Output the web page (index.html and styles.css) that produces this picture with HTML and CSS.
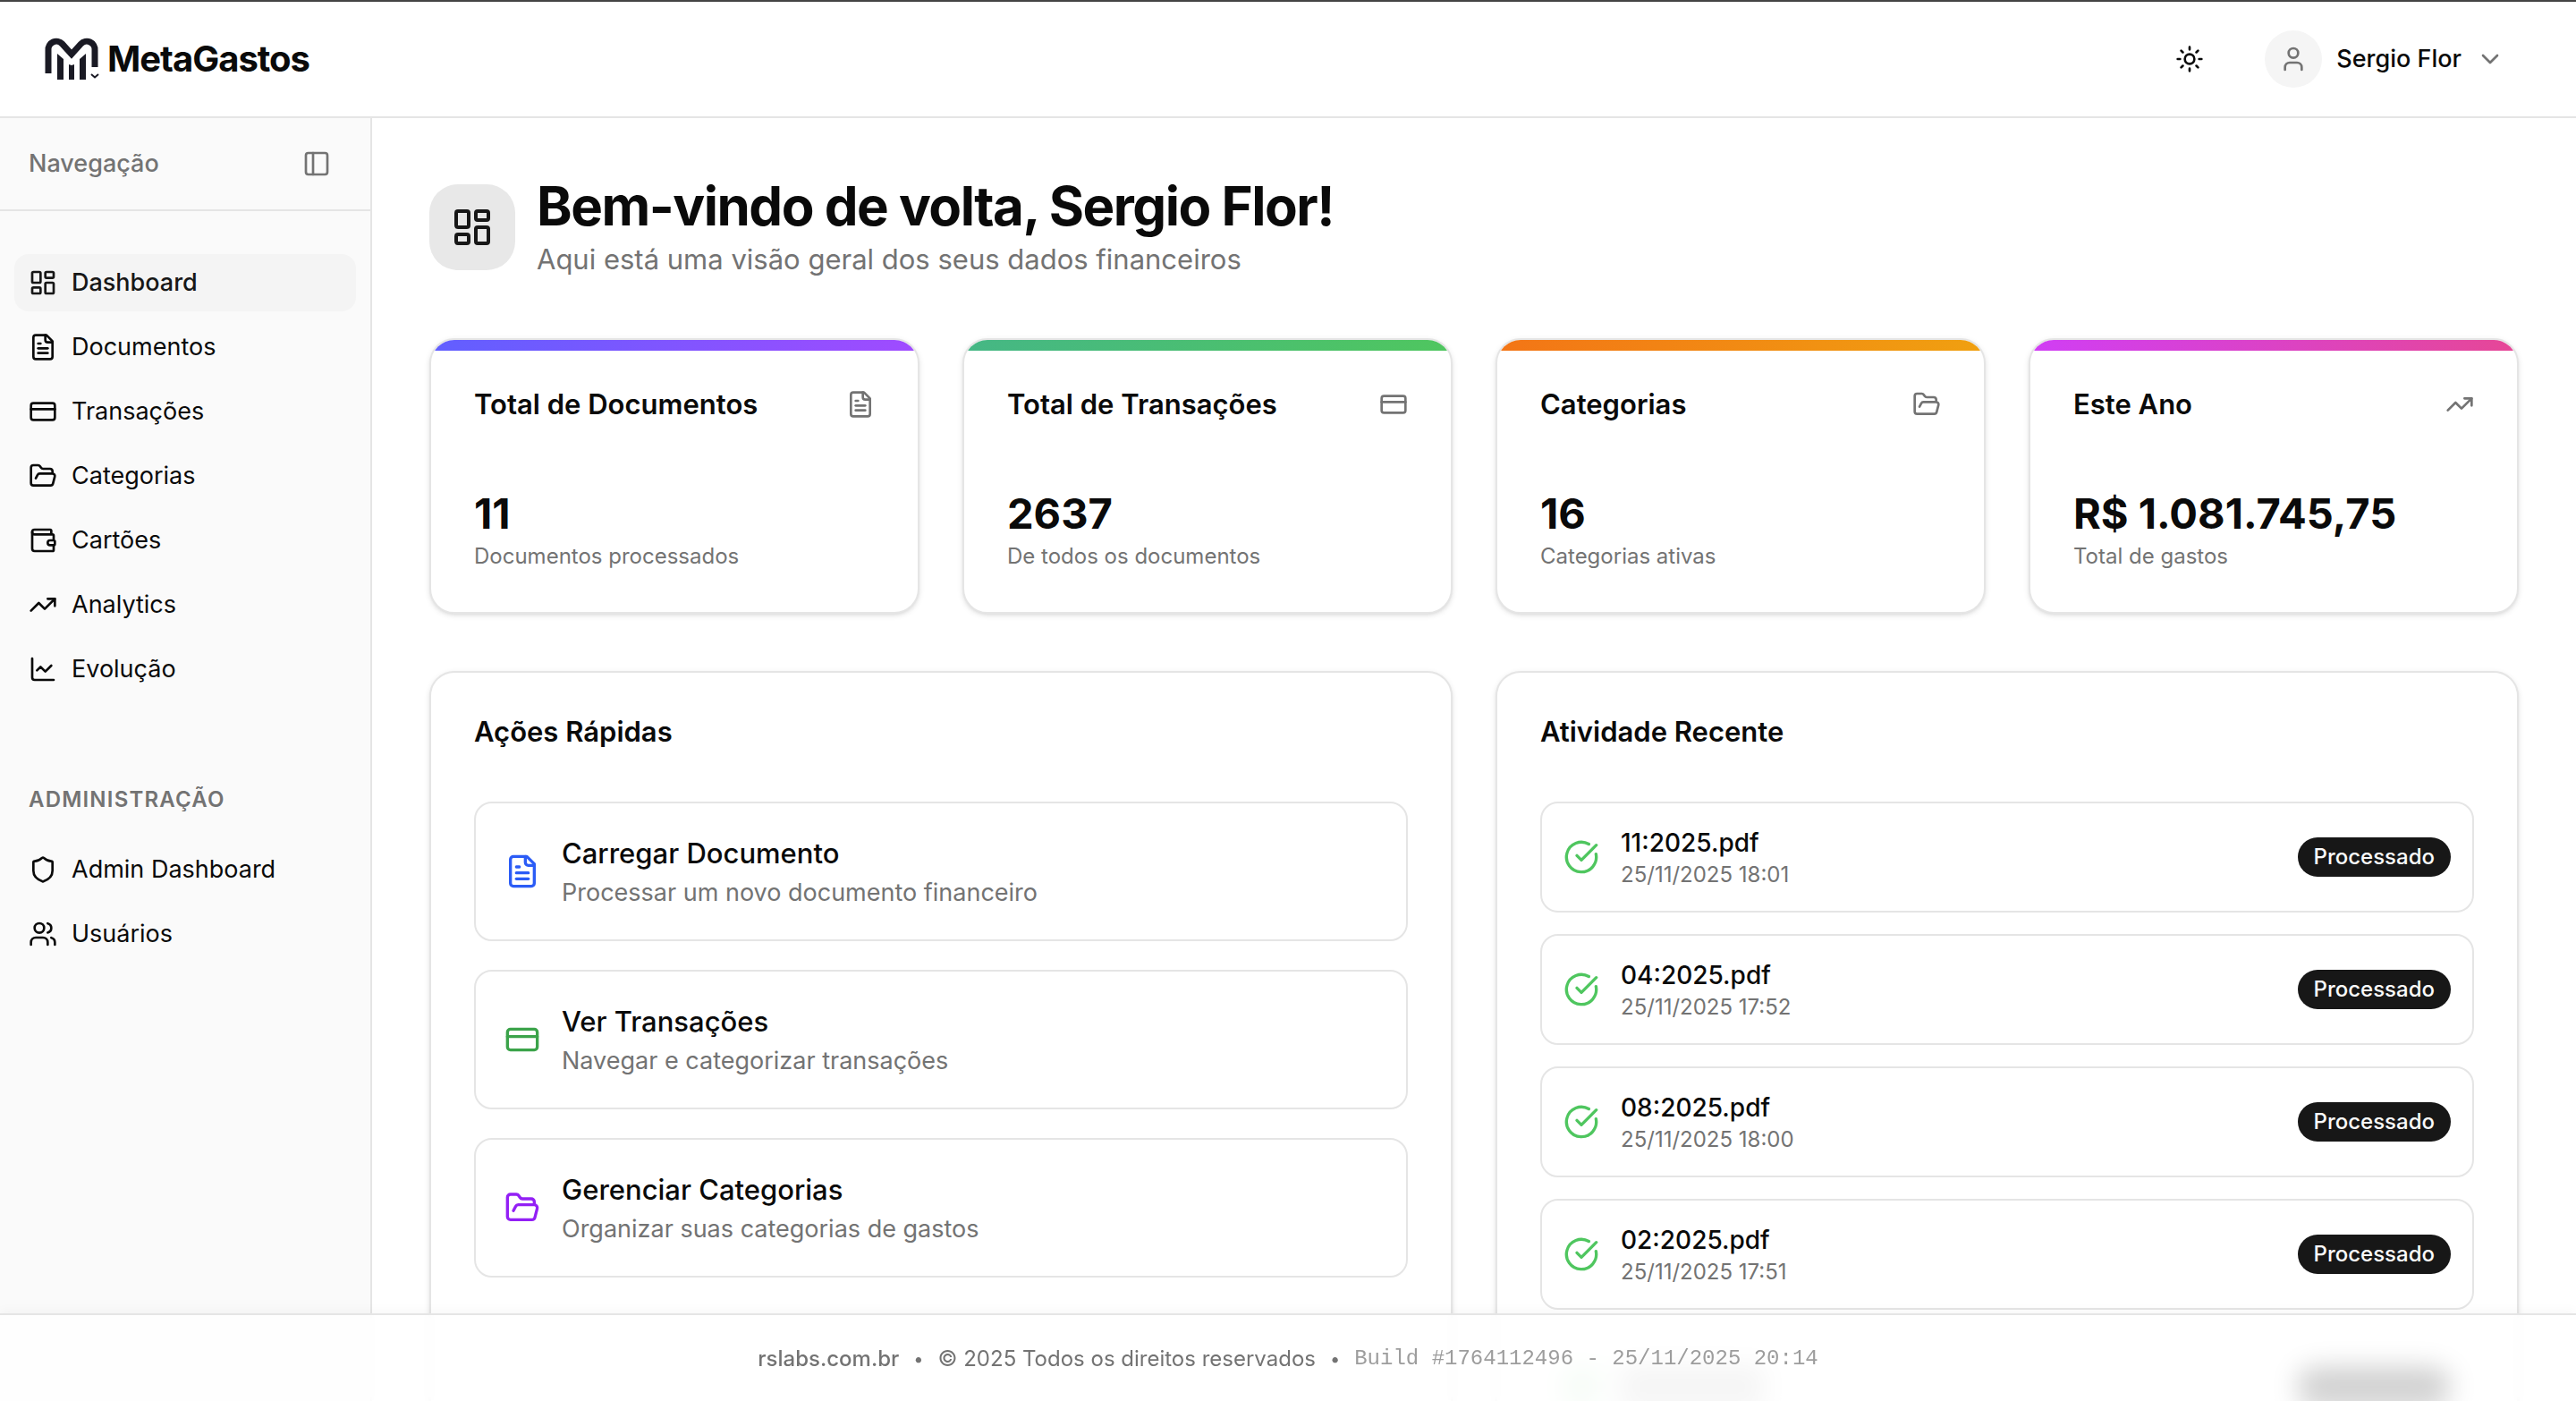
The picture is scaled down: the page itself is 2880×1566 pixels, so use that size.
FILE: index.html
```html
<!DOCTYPE html>
<html lang="pt-BR">
<head>
    <meta charset="UTF-8">
    <meta name="viewport" content="width=device-width, initial-scale=1.0">
    <title>MetaGastos</title>
    <link rel="stylesheet" href="styles.css">
</head>
<body>
    <!-- Icon set -->
    <svg class="sprite" xmlns="http://www.w3.org/2000/svg">
        <symbol id="dashboard" viewBox="0 0 24 24">
            <rect width="7" height="9" x="3" y="3" rx="1"/>
            <rect width="7" height="5" x="14" y="3" rx="1"/>
            <rect width="7" height="9" x="14" y="12" rx="1"/>
            <rect width="7" height="5" x="3" y="16" rx="1"/>
        </symbol>
        <symbol id="file" viewBox="0 0 24 24">
            <path d="M15 2H6a2 2 0 0 0-2 2v16a2 2 0 0 0 2 2h12a2 2 0 0 0 2-2V7Z"/>
            <path d="M14 2v4a2 2 0 0 0 2 2h4"/>
            <path d="M10 9H8"/>
            <path d="M16 13H8"/>
            <path d="M16 17H8"/>
        </symbol>
        <symbol id="card" viewBox="0 0 24 24">
            <rect width="20" height="14" x="2" y="5" rx="2"/>
            <path d="M2 10h20"/>
        </symbol>
        <symbol id="folder" viewBox="0 0 24 24">
            <path d="m6 14 1.5-2.9A2 2 0 0 1 9.24 10H20a2 2 0 0 1 1.94 2.5l-1.54 6a2 2 0 0 1-1.95 1.5H4a2 2 0 0 1-2-2V5a2 2 0 0 1 2-2h3.9a2 2 0 0 1 1.69.9l.81 1.2a2 2 0 0 0 1.67.9H18a2 2 0 0 1 2 2v2"/>
        </symbol>
        <symbol id="wallet" viewBox="0 0 24 24">
            <path d="M19 7V4a1 1 0 0 0-1-1H5a2 2 0 0 0 0 4h15a1 1 0 0 1 1 1v4h-3a2 2 0 0 0 0 4h3a1 1 0 0 0 1-1v-2a1 1 0 0 0-1-1"/>
            <path d="M3 5v14a2 2 0 0 0 2 2h15a1 1 0 0 0 1-1v-4"/>
        </symbol>
        <symbol id="trending" viewBox="0 0 24 24">
            <path d="M16 7h6v6"/>
            <path d="m22 7-8.5 8.5-5-5L2 17"/>
        </symbol>
        <symbol id="chart" viewBox="0 0 24 24">
            <path d="M3 3v16a2 2 0 0 0 2 2h16"/>
            <path d="m19 9-5 5-4-4-3 3"/>
        </symbol>
        <symbol id="shield" viewBox="0 0 24 24">
            <path d="M20 13c0 5-3.500 7.500-7.660 8.950a1 1 0 0 1-.67-.01C7.500 20.500 4 18 4 13V6a1 1 0 0 1 1-1c2 0 4.500-1.200 6.240-2.720a1.170 1.170 0 0 1 1.520 0C14.510 3.810 17 5 19 5a1 1 0 0 1 1 1z"/>
        </symbol>
        <symbol id="users" viewBox="0 0 24 24">
            <path d="M16 21v-2a4 4 0 0 0-4-4H6a4 4 0 0 0-4 4v2"/>
            <circle cx="9" cy="7" r="4"/>
            <path d="M22 21v-2a4 4 0 0 0-3-3.870"/>
            <path d="M16 3.130a4 4 0 0 1 0 7.750"/>
        </symbol>
        <symbol id="user" viewBox="0 0 24 24">
            <path d="M19 21v-2a4 4 0 0 0-4-4H9a4 4 0 0 0-4 4v2"/>
            <circle cx="12" cy="7" r="4"/>
        </symbol>
        <symbol id="sun" viewBox="0 0 24 24">
            <circle cx="12" cy="12" r="4"/>
            <path d="M12 2v2M12 20v2M4.930 4.930l1.410 1.410M17.660 17.660l1.410 1.410M2 12h2M20 12h2M6.340 17.660l-1.410 1.410M19.070 4.930l-1.410 1.410"/>
        </symbol>
        <symbol id="chevron" viewBox="0 0 24 24">
            <path d="m6 9 6 6 6-6"/>
        </symbol>
        <symbol id="panel" viewBox="0 0 24 24">
            <rect width="18" height="18" x="3" y="3" rx="2"/>
            <path d="M9 3v18"/>
        </symbol>
        <symbol id="check" viewBox="0 0 24 24">
            <path d="M21.801 10A10 10 0 1 1 17 3.335"/>
            <path d="m9 11 3 3L22 4"/>
        </symbol>
    </svg>

    <header class="topbar">
        <a class="brand" href="#">
            <svg class="logo" viewBox="48 40 64 52">
                <path class="logo-arch" d="M54 82V56a9 9 0 0 1 15.500-7L80 60.500 90.500 49a9 9 0 0 1 15.500 7V75"/>
                <path class="logo-bars" d="M64 60l7 6v23h-7zM96 60l-7 6v23h7zM77 72l3 1 3-1v17h-6z"/>
                <path class="logo-tick" d="M102 83l4 3.500 4-3.500"/>
            </svg>
            <span>MetaGastos</span>
        </a>
        <div class="topbar-right">
            <button class="icon-button" type="button" aria-label="Alternar tema">
                <svg class="icon"><use href="#sun"/></svg>
            </button>
            <button class="user-button" type="button">
                <span class="avatar"><svg class="icon"><use href="#user"/></svg></span>
                <span>Sergio Flor</span>
                <svg class="icon muted"><use href="#chevron"/></svg>
            </button>
        </div>
    </header>

    <div class="layout">
        <aside class="sidebar">
            <div class="sidebar-header">
                <span>Navegação</span>
                <button class="icon-button" type="button" aria-label="Recolher menu">
                    <svg class="icon"><use href="#panel"/></svg>
                </button>
            </div>
            <nav class="nav">
                <a class="nav-item active" href="#"><svg class="icon"><use href="#dashboard"/></svg>Dashboard</a>
                <a class="nav-item" href="#"><svg class="icon"><use href="#file"/></svg>Documentos</a>
                <a class="nav-item" href="#"><svg class="icon"><use href="#card"/></svg>Transações</a>
                <a class="nav-item" href="#"><svg class="icon"><use href="#folder"/></svg>Categorias</a>
                <a class="nav-item" href="#"><svg class="icon"><use href="#wallet"/></svg>Cartões</a>
                <a class="nav-item" href="#"><svg class="icon"><use href="#trending"/></svg>Analytics</a>
                <a class="nav-item" href="#"><svg class="icon"><use href="#chart"/></svg>Evolução</a>
            </nav>
            <h2 class="nav-label">Administração</h2>
            <nav class="nav nav-admin">
                <a class="nav-item" href="#"><svg class="icon"><use href="#shield"/></svg>Admin Dashboard</a>
                <a class="nav-item" href="#"><svg class="icon"><use href="#users"/></svg>Usuários</a>
            </nav>
        </aside>

        <main class="content">
            <div class="page-header">
                <div class="page-icon"><svg class="icon"><use href="#dashboard"/></svg></div>
                <div>
                    <h1>Bem-vindo de volta, Sergio Flor!</h1>
                    <p>Aqui está uma visão geral dos seus dados financeiros</p>
                </div>
            </div>

            <section class="stats">
                <div class="card stat stat-documents">
                    <div class="stat-head"><h3>Total de Documentos</h3><svg class="icon muted"><use href="#file"/></svg></div>
                    <div class="stat-value">11</div>
                    <p class="small">Documentos processados</p>
                </div>
                <div class="card stat stat-transactions">
                    <div class="stat-head"><h3>Total de Transações</h3><svg class="icon muted"><use href="#card"/></svg></div>
                    <div class="stat-value">2637</div>
                    <p class="small">De todos os documentos</p>
                </div>
                <div class="card stat stat-categories">
                    <div class="stat-head"><h3>Categorias</h3><svg class="icon muted"><use href="#folder"/></svg></div>
                    <div class="stat-value">16</div>
                    <p class="small">Categorias ativas</p>
                </div>
                <div class="card stat stat-year">
                    <div class="stat-head"><h3>Este Ano</h3><svg class="icon muted"><use href="#trending"/></svg></div>
                    <div class="stat-value">R$ 1.081.745,75</div>
                    <p class="small">Total de gastos</p>
                </div>
            </section>

            <section class="panels">
                <div class="card">
                    <h3 class="panel-title">Ações Rápidas</h3>
                    <div class="actions">
                        <a class="action" href="#">
                            <svg class="icon blue"><use href="#file"/></svg>
                            <div><h4>Carregar Documento</h4><p>Processar um novo documento financeiro</p></div>
                        </a>
                        <a class="action" href="#">
                            <svg class="icon green"><use href="#card"/></svg>
                            <div><h4>Ver Transações</h4><p>Navegar e categorizar transações</p></div>
                        </a>
                        <a class="action" href="#">
                            <svg class="icon purple"><use href="#folder"/></svg>
                            <div><h4>Gerenciar Categorias</h4><p>Organizar suas categorias de gastos</p></div>
                        </a>
                    </div>
                </div>
                <div class="card">
                    <h3 class="panel-title">Atividade Recente</h3>
                    <ul class="activity">
                        <li>
                            <svg class="icon"><use href="#check"/></svg>
                            <div class="activity-info"><h4>11:2025.pdf</h4><p class="small">25/11/2025 18:01</p></div>
                            <span class="badge">Processado</span>
                        </li>
                        <li>
                            <svg class="icon"><use href="#check"/></svg>
                            <div class="activity-info"><h4>04:2025.pdf</h4><p class="small">25/11/2025 17:52</p></div>
                            <span class="badge">Processado</span>
                        </li>
                        <li>
                            <svg class="icon"><use href="#check"/></svg>
                            <div class="activity-info"><h4>08:2025.pdf</h4><p class="small">25/11/2025 18:00</p></div>
                            <span class="badge">Processado</span>
                        </li>
                        <li>
                            <svg class="icon"><use href="#check"/></svg>
                            <div class="activity-info"><h4>02:2025.pdf</h4><p class="small">25/11/2025 17:51</p></div>
                            <span class="badge">Processado</span>
                        </li>
                        <li class="loading" aria-hidden="true">
                            <svg class="icon"><use href="#check"/></svg>
                            <div class="loading-line"></div>
                            <div class="loading-badge"></div>
                        </li>
                    </ul>
                </div>
            </section>
        </main>
    </div>

    <footer class="footer">
        <a href="#">rslabs.com.br</a>
        <span class="dot">•</span>
        <span>© 2025 Todos os direitos reservados</span>
        <span class="dot">•</span>
        <span class="build">Build #1764112496 - 25/11/2025 20:14</span>
    </footer>
</body>
</html>
```
FILE: styles.css
```css
* {
    box-sizing: border-box;
}
body {
    font-family: Inter, "Liberation Sans", sans-serif;
    font-size: 27px;
    line-height: 40px;
    margin: 0;
    color: #0a0a0a;
    background-color: #fff;
    display: flex;
    flex-direction: column;
    height: 100vh;
    overflow: hidden;
}
h1, h2, h3, h4, p, ul {
    margin: 0;
    padding: 0;
}
a {
    color: inherit;
    text-decoration: none;
}
button {
    font: inherit;
    color: inherit;
    background: none;
    border: none;
    padding: 0;
    cursor: pointer;
}
.sprite {
    display: none;
}
.icon {
    width: 32px;
    height: 32px;
    flex-shrink: 0;
    fill: none;
    stroke: currentColor;
    stroke-width: 2;
    stroke-linecap: round;
    stroke-linejoin: round;
}
.muted {
    color: #737373;
}

/* Top bar */
.topbar {
    display: flex;
    align-items: center;
    justify-content: space-between;
    height: 132px;
    flex-shrink: 0;
    padding: 0 80px 0 48px;
    border-top: 2px solid #444;
    border-bottom: 2px solid #e5e5e5;
}
.brand {
    display: flex;
    align-items: center;
    gap: 8px;
    font-size: 40px;
    font-weight: 700;
    letter-spacing: -0.025em;
}
.logo {
    width: 64px;
    height: 52px;
    fill: none;
    stroke: #1a1a24;
}
.logo-arch {
    stroke-width: 7;
}
.logo-bars {
    fill: #1a1a24;
    stroke: none;
}
.logo-tick {
    stroke-width: 2;
}
.topbar-right {
    display: flex;
    align-items: center;
    gap: 68px;
}
.icon-button {
    display: flex;
}
.user-button {
    display: flex;
    align-items: center;
    gap: 16px;
    font-weight: 500;
}
.avatar {
    display: flex;
    align-items: center;
    justify-content: center;
    width: 64px;
    height: 64px;
    border-radius: 50%;
    color: #737373;
    background-color: #f5f5f5;
}

/* Sidebar */
.layout {
    display: flex;
    flex: 1;
    min-height: 0;
    overflow: hidden;
}
.sidebar {
    width: 416px;
    flex-shrink: 0;
    background-color: #fafafa;
    border-right: 2px solid #e5e5e5;
}
.sidebar-header {
    display: flex;
    align-items: center;
    justify-content: space-between;
    height: 104px;
    padding: 0 44px 0 32px;
    color: #737373;
    font-weight: 500;
    border-bottom: 2px solid #e5e5e5;
}
.nav {
    display: flex;
    flex-direction: column;
    gap: 8px;
    padding: 48px 16px 0;
}
.nav-item {
    display: flex;
    align-items: center;
    gap: 16px;
    height: 64px;
    padding: 0 16px;
    border-radius: 16px;
}
.nav-item.active {
    font-weight: 500;
    color: #171717;
    background-color: #f4f4f4;
}
.nav-label {
    margin: 98px 32px 0;
    font-size: 24px;
    line-height: 32px;
    font-weight: 600;
    letter-spacing: 0.05em;
    text-transform: uppercase;
    color: #737373;
}
.nav-admin {
    padding-top: 30px;
}

/* Content */
.content {
    flex: 1;
    min-width: 0;
    padding: 62px 64px 0;
}
.page-header {
    display: flex;
    align-items: center;
    gap: 24px;
    margin-bottom: 64px;
}
.page-icon {
    display: flex;
    align-items: center;
    justify-content: center;
    width: 96px;
    height: 96px;
    border-radius: 32px;
    color: #171717;
    background-color: #e8e8e8;
}
.page-icon .icon {
    width: 48px;
    height: 48px;
}
.page-header h1 {
    font-size: 60px;
    line-height: 72px;
    font-weight: 700;
    letter-spacing: -0.025em;
}
.page-header p {
    font-size: 31px;
    line-height: 48px;
    color: #737373;
}
.card {
    padding: 48px;
    border: 2px solid #e5e5e5;
    border-radius: 28px;
    background-color: #fff;
    box-shadow: 0 2px 6px rgba(0, 0, 0, 0.1), 0 2px 4px -2px rgba(0, 0, 0, 0.1);
}
.small {
    font-size: 24px;
    line-height: 32px;
    color: #737373;
}
.stats {
    display: grid;
    grid-template-columns: repeat(4, 1fr);
    gap: 48px;
    margin-bottom: 64px;
}
.stat {
    padding-bottom: 46px;
    overflow: hidden;
}
/* Coloured strip along the top edge of the card */
.stat::before {
    content: "";
    display: block;
    height: 12px;
    margin: -48px -48px 36px;
}
.stat-documents::before {
    background: linear-gradient(to right, #615fff, #a04bff);
}
.stat-transactions::before {
    background: linear-gradient(to right, #45b785, #4fc65f);
}
.stat-categories::before {
    background: linear-gradient(to right, #f37516, #f0a010);
}
.stat-year::before {
    background: linear-gradient(to right, #d03ef5, #e64796);
}
.stat-head {
    display: flex;
    align-items: center;
    justify-content: space-between;
    margin-bottom: 66px;
}
.stat-head h3 {
    font-size: 31px;
    line-height: 48px;
    font-weight: 600;
}
.stat-value {
    font-size: 47px;
    line-height: 64px;
    font-weight: 700;
}
.panels {
    display: grid;
    grid-template-columns: 1fr 1fr;
    gap: 48px;
}
.panel-title {
    margin-bottom: 60px;
    font-size: 31px;
    line-height: 36px;
    font-weight: 600;
}
.actions {
    display: flex;
    flex-direction: column;
    gap: 32px;
}
.action {
    display: flex;
    align-items: center;
    gap: 24px;
    padding: 32px;
    border: 2px solid #e5e5e5;
    border-radius: 20px;
}
.action .icon,
.activity .icon {
    width: 40px;
    height: 40px;
}
.action h4 {
    font-size: 31px;
    line-height: 48px;
    font-weight: 500;
}
.action p {
    color: #737373;
}
.blue {
    color: #2b5cf6;
}
.green {
    color: #3ba34a;
}
.purple {
    color: #9320f5;
}
.activity {
    display: flex;
    flex-direction: column;
    gap: 24px;
    list-style: none;
}
.activity li {
    display: flex;
    align-items: center;
    gap: 24px;
    padding: 24px;
    border: 2px solid #e5e5e5;
    border-radius: 20px;
}
.activity .icon {
    color: #4fc65f;
}
.activity-info {
    flex: 1;
}
.activity h4 {
    font-size: 28px;
    font-weight: 500;
}
.badge {
    padding: 6px 18px;
    border-radius: 22px;
    font-size: 24px;
    line-height: 32px;
    font-weight: 500;
    color: #fafafa;
    background-color: #171717;
}
/* Row still loading, seen blurred behind the footer */
.activity .loading {
    justify-content: space-between;
    height: 124px;
    border-color: transparent;
    filter: blur(14px);
}
.loading-line {
    width: 160px;
    height: 48px;
    margin-right: auto;
    background-color: #ccc;
}
.loading-badge {
    width: 172px;
    height: 44px;
    border-radius: 22px;
    background-color: #171717;
}

/* Footer stays over the scrolled content */
.footer {
    position: fixed;
    left: 0;
    right: 0;
    bottom: 0;
    display: flex;
    align-items: center;
    justify-content: center;
    gap: 16px;
    height: 98px;
    padding-top: 2px;
    border-top: 2px solid #e5e5e5;
    font-size: 24px;
    line-height: 32px;
    color: #737373;
    background-color: rgba(255, 255, 255, 0.8);
    backdrop-filter: blur(4px);
    box-shadow: 0 -2px 12px rgba(0, 0, 0, 0.04);
}
.footer a {
    font-weight: 500;
}
.dot {
    font-size: 20px;
}
.build {
    font-family: "Liberation Mono", monospace;
    opacity: 0.7;
}
```
